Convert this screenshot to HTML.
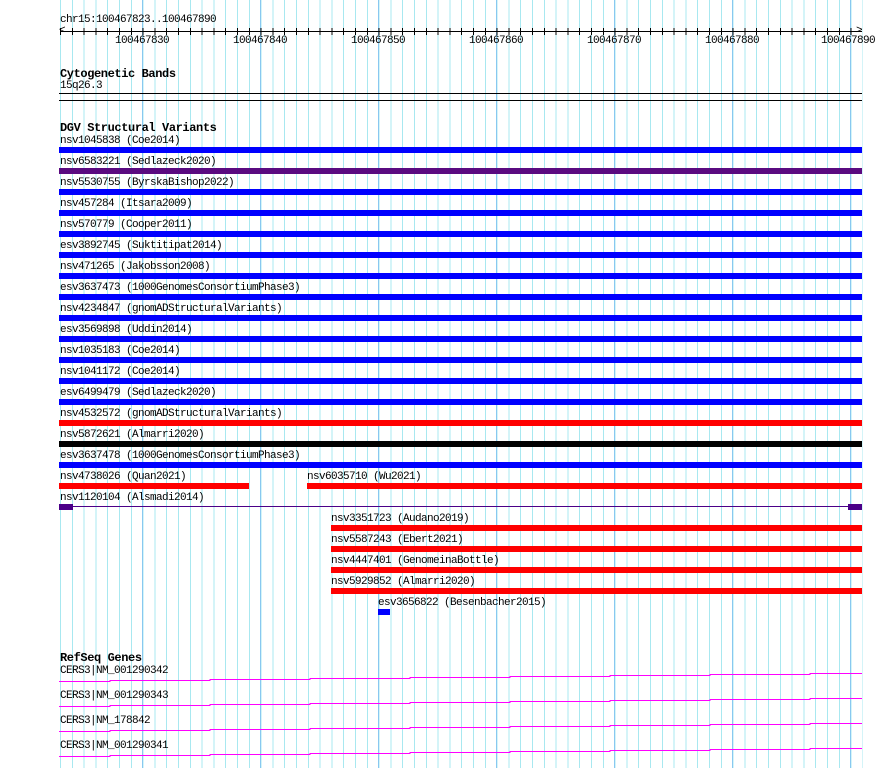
<!DOCTYPE html>
<html><head><meta charset="utf-8"><style>
*{margin:0;padding:0}
body{width:890px;height:768px;background:#fff;position:relative;overflow:hidden;font-family:"Liberation Mono","DejaVu Sans Mono",monospace;font-size:11px;letter-spacing:-0.6px;color:#000}
.g{position:absolute;left:60px;top:0;width:803px;height:768px;background:repeating-linear-gradient(90deg,#a8e8f0 0,#a8e8f0 1px,transparent 1px,transparent 11.8px)}
.d{position:absolute;left:142px;top:0;width:720px;height:768px;background:repeating-linear-gradient(90deg,#88c8f0 0,#88c8f0 1px,transparent 1px,transparent 118px)}
.t{position:absolute;white-space:pre;line-height:12px}
.b{position:absolute;height:6px}
.h{position:absolute;font-weight:bold;font-size:12px;letter-spacing:-0.4px;white-space:pre}
.n{position:absolute;white-space:pre;top:35px}
</style></head><body>
<div class="g"></div><div class="d"></div>
<div class="t" style="left:60px;top:14px">chr15:100467823..100467890</div>
<div style="position:absolute;left:60px;top:31px;width:802px;height:1px;background:#000"></div>
<div style="position:absolute;left:60px;top:28px;width:802px;height:7px;background:repeating-linear-gradient(90deg,#000 0,#000 1px,transparent 1px,transparent 11.8px)"></div>
<div class="t" style="left:59px;top:25px">&lt;</div>
<div class="t" style="left:856px;top:25px">&gt;</div>
<div class="n" style="left:115px">100467830</div>
<div class="n" style="left:233px">100467840</div>
<div class="n" style="left:351px">100467850</div>
<div class="n" style="left:469px">100467860</div>
<div class="n" style="left:587px">100467870</div>
<div class="n" style="left:705px">100467880</div>
<div class="n" style="left:821px">100467890</div>
<div class="h" style="left:60px;top:67px">Cytogenetic Bands</div>
<div class="t" style="left:60px;top:80px">15q26.3</div>
<div style="position:absolute;left:59px;top:93px;width:803px;height:1px;background:#000"></div>
<div style="position:absolute;left:59px;top:100px;width:803px;height:1px;background:#000"></div>
<div class="h" style="left:60px;top:121px">DGV Structural Variants</div>

<div class="t" style="left:60px;top:135px">nsv1045838 (Coe2014)</div><div class="b" style="left:59px;top:147px;width:803px;background:#0000ff"></div>
<div class="t" style="left:60px;top:156px">nsv6583221 (Sedlazeck2020)</div><div class="b" style="left:59px;top:168px;width:803px;background:#5a0a80"></div>
<div class="t" style="left:60px;top:177px">nsv5530755 (ByrskaBishop2022)</div><div class="b" style="left:59px;top:189px;width:803px;background:#0000ff"></div>
<div class="t" style="left:60px;top:198px">nsv457284 (Itsara2009)</div><div class="b" style="left:59px;top:210px;width:803px;background:#0000ff"></div>
<div class="t" style="left:60px;top:219px">nsv570779 (Cooper2011)</div><div class="b" style="left:59px;top:231px;width:803px;background:#0000ff"></div>
<div class="t" style="left:60px;top:240px">esv3892745 (Suktitipat2014)</div><div class="b" style="left:59px;top:252px;width:803px;background:#0000ff"></div>
<div class="t" style="left:60px;top:261px">nsv471265 (Jakobsson2008)</div><div class="b" style="left:59px;top:273px;width:803px;background:#0000ff"></div>
<div class="t" style="left:60px;top:282px">esv3637473 (1000GenomesConsortiumPhase3)</div><div class="b" style="left:59px;top:294px;width:803px;background:#0000ff"></div>
<div class="t" style="left:60px;top:303px">nsv4234847 (gnomADStructuralVariants)</div><div class="b" style="left:59px;top:315px;width:803px;background:#0000ff"></div>
<div class="t" style="left:60px;top:324px">esv3569898 (Uddin2014)</div><div class="b" style="left:59px;top:336px;width:803px;background:#0000ff"></div>
<div class="t" style="left:60px;top:345px">nsv1035183 (Coe2014)</div><div class="b" style="left:59px;top:357px;width:803px;background:#0000ff"></div>
<div class="t" style="left:60px;top:366px">nsv1041172 (Coe2014)</div><div class="b" style="left:59px;top:378px;width:803px;background:#0000ff"></div>
<div class="t" style="left:60px;top:387px">esv6499479 (Sedlazeck2020)</div><div class="b" style="left:59px;top:399px;width:803px;background:#0000ff"></div>
<div class="t" style="left:60px;top:408px">nsv4532572 (gnomADStructuralVariants)</div><div class="b" style="left:59px;top:420px;width:803px;background:#ff0000"></div>
<div class="t" style="left:60px;top:429px">nsv5872621 (Almarri2020)</div><div class="b" style="left:59px;top:441px;width:803px;background:#000"></div>
<div class="t" style="left:60px;top:450px">esv3637478 (1000GenomesConsortiumPhase3)</div><div class="b" style="left:59px;top:462px;width:803px;background:#0000ff"></div>
<div class="t" style="left:60px;top:471px">nsv4738026 (Quan2021)</div><div class="b" style="left:59px;top:483px;width:190px;background:#ff0000"></div>
<div class="t" style="left:307px;top:471px">nsv6035710 (Wu2021)</div><div class="b" style="left:307px;top:483px;width:555px;background:#ff0000"></div>
<div class="t" style="left:60px;top:492px">nsv1120104 (Alsmadi2014)</div>
<div style="position:absolute;left:59px;top:506px;width:803px;height:1px;background:#4b0088"></div>
<div class="b" style="left:59px;top:504px;width:14px;background:#4b0088"></div>
<div class="b" style="left:848px;top:504px;width:14px;background:#4b0088"></div>
<div class="t" style="left:331px;top:513px">nsv3351723 (Audano2019)</div><div class="b" style="left:331px;top:525px;width:531px;background:#ff0000"></div>
<div class="t" style="left:331px;top:534px">nsv5587243 (Ebert2021)</div><div class="b" style="left:331px;top:546px;width:531px;background:#ff0000"></div>
<div class="t" style="left:331px;top:555px">nsv4447401 (GenomeinaBottle)</div><div class="b" style="left:331px;top:567px;width:531px;background:#ff0000"></div>
<div class="t" style="left:331px;top:576px">nsv5929852 (Almarri2020)</div><div class="b" style="left:331px;top:588px;width:531px;background:#ff0000"></div>
<div class="t" style="left:378px;top:597px">esv3656822 (Besenbacher2015)</div><div class="b" style="left:378px;top:609px;width:12px;background:#0000ff"></div>

<div class="h" style="left:60px;top:651px">RefSeq Genes</div>
<div class="t" style="left:60px;top:665px">CERS3|NM_001290342</div>
<div class="t" style="left:60px;top:690px">CERS3|NM_001290343</div>
<div class="t" style="left:60px;top:715px">CERS3|NM_178842</div>
<div class="t" style="left:60px;top:740px">CERS3|NM_001290341</div>
<svg style="position:absolute;left:0;top:0" width="890" height="768">
<g stroke="#ff00ff" stroke-width="1" fill="none">
<path d="M59 681.5H110V680.5H210V679.5H310V678.5H410V677.5H510V676.5H610V675.5H710V674.5H810V673.5H862"/>
<path d="M59 706.5H110V705.5H210V704.5H310V703.5H410V702.5H510V701.5H610V700.5H710V699.5H810V698.5H862"/>
<path d="M59 731.5H110V730.5H210V729.5H310V728.5H410V727.5H510V726.5H610V725.5H710V724.5H810V723.5H862"/>
<path d="M59 756.5H110V755.5H210V754.5H310V753.5H410V752.5H510V751.5H610V750.5H710V749.5H810V748.5H862"/>
</g></svg>
</body></html>
